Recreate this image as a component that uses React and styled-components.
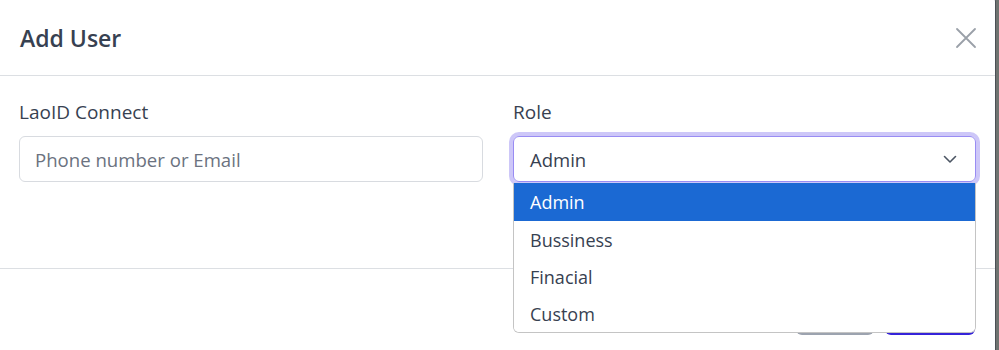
import React from 'react';
import styled, { createGlobalStyle } from 'styled-components';

const GlobalStyle = createGlobalStyle`
  html, body {
    margin: 0;
    padding: 0;
    background: #6f7370;
    font-family: "Open Sans", "Noto Sans", sans-serif;
    overflow: hidden;
  }
`;

const Modal = styled.div`
  width: 995px;
  margin-top: -6px;
  background: #fff;
  border-radius: 0 8px 8px 0;
  border-right: 1px solid #4b4f55;
  min-height: 380px;
`;

const Header = styled.div`
  height: 75px;
  padding: 6px 18px 0 20px;
  display: flex;
  align-items: center;
  justify-content: space-between;
  border-bottom: 1px solid #dcdfe3;
`;

const Title = styled.h2`
  margin: 0;
  font-size: 23px;
  font-weight: 600;
  color: #374151;
`;

const CloseButton = styled.button`
  border: 0;
  background: transparent;
  padding: 0;
  width: 22px;
  height: 22px;
  cursor: pointer;
  display: flex;
`;

const Body = styled.div`
  padding: 24px 20px 86px 19px;
  display: grid;
  grid-template-columns: 464px 463px;
  column-gap: 30px;
  border-bottom: 1px solid #dcdfe3;
`;

const Field = styled.div`
  display: flex;
  flex-direction: column;
  gap: 12px;
  position: relative;
`;

const Label = styled.label`
  font-size: 19px;
  line-height: 24px;
  color: #374151;
`;

const Input = styled.input`
  box-sizing: border-box;
  height: 46px;
  width: 100%;
  border: 1px solid #d8dbe0;
  border-radius: 6px;
  padding: 0 15px;
  font-family: inherit;
  font-size: 18.6px;
  color: #374151;
  outline: none;
  &::placeholder {
    color: #6b7280;
  }
`;

const Select = styled.div`
  box-sizing: border-box;
  height: 46px;
  border: 1px solid #998cf3;
  border-radius: 6px;
  box-shadow: 0 0 0 4px #cdc7f8;
  padding: 0 18px 0 16px;
  display: flex;
  align-items: center;
  justify-content: space-between;
  font-size: 18.5px;
  color: #374151;
`;

const Menu = styled.ul`
  position: absolute;
  top: 83px;
  left: 0;
  right: 0;
  margin: 0;
  padding: 0;
  list-style: none;
  background: #fff;
  border: 1px solid #c4c4c4;
  border-top: 0;
  border-radius: 0 0 6px 6px;
  overflow: hidden;
  z-index: 5;
`;

const Option = styled.li`
  height: 37px;
  display: flex;
  align-items: center;
  padding: 0 16px;
  font-size: 18px;
  color: ${(p) => (p.$active ? '#fff' : '#374151')};
  background: ${(p) => (p.$active ? '#1b69d3' : '#fff')};
  &:first-child {
    height: 38px;
  }
`;

const Footer = styled.div`
  display: flex;
  justify-content: flex-end;
  gap: 11px;
  padding: 26px 20px 16px 0;
`;

const Button = styled.button`
  height: 40px;
  border: 0;
  border-radius: 6px;
  padding: 0 20px;
  font-family: inherit;
  font-size: 16px;
  color: #fff;
  background: ${(p) => (p.$primary ? '#3523d9' : '#9ca3af')};
  width: ${(p) => (p.$primary ? '90px' : '78px')};
`;

const roles = ['Admin', 'Bussiness', 'Finacial', 'Custom'];

export default function App() {
  return (
    <>
      <GlobalStyle />
      <Modal>
        <Header>
          <Title>Add User</Title>
          <CloseButton aria-label="Close">
            <svg width="22" height="22" viewBox="0 0 22 22" fill="none">
              <path d="M2 2L20 20M20 2L2 20" stroke="#9aa0a8" strokeWidth="1.8" strokeLinecap="round" />
            </svg>
          </CloseButton>
        </Header>
        <Body>
          <Field>
            <Label>LaoID Connect</Label>
            <Input placeholder="Phone number or Email" />
          </Field>
          <Field>
            <Label>Role</Label>
            <Select>
              <span>Admin</span>
              <svg width="14" height="9" viewBox="0 0 14 9" fill="none">
                <path d="M1.5 1.5L7 7L12.5 1.5" stroke="#4b5563" strokeWidth="1.6" strokeLinecap="round" strokeLinejoin="round" />
              </svg>
            </Select>
            <Menu>
              {roles.map((r, i) => (
                <Option key={r} $active={i === 0}>{r}</Option>
              ))}
            </Menu>
          </Field>
        </Body>
        <Footer>
          <Button>Close</Button>
          <Button $primary>Save</Button>
        </Footer>
      </Modal>
    </>
  );
}
